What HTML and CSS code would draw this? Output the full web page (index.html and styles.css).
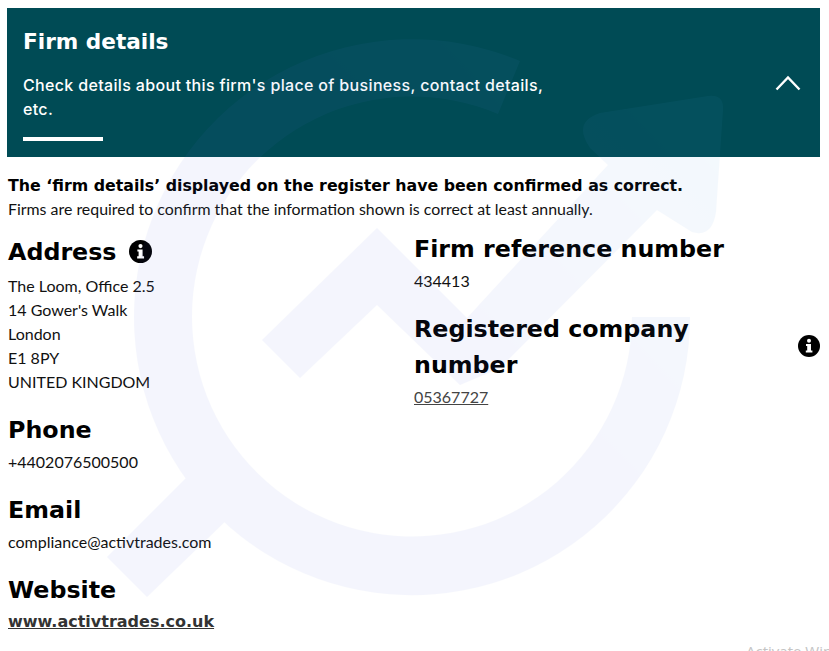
FILE: index.html
```html
<!DOCTYPE html>
<html lang="en">
<head>
    <meta charset="UTF-8">
    <meta name="viewport" content="width=device-width, initial-scale=1.0">
    <title>Firm details</title>
    <link rel="stylesheet" href="styles.css">
</head>
<body>
    <div class="page">
        <!-- Collapsible banner -->
        <div class="banner">
            <div class="banner-text">
                <h2>Firm details</h2>
                <p>Check details about this firm's place of business, contact details, etc.</p>
                <div class="banner-rule"></div>
            </div>
            <svg class="chevron" width="26" height="16" viewBox="0 0 26 16">
                <path d="M1.5 14.5 L13 2.5 L24.5 14.5" fill="none" stroke="#fff" stroke-width="2.4"/>
            </svg>
        </div>

        <div class="notice">
            <strong>The ‘firm details’ displayed on the register have been confirmed as correct.</strong>
            <p>Firms are required to confirm that the information shown is correct at least annually.</p>
        </div>

        <div class="columns">
            <div class="col-left">
                <div class="field">
                    <h3 class="with-icon">Address
                        <svg class="info" width="23" height="23" viewBox="0 0 22 22">
                            <circle cx="11" cy="11" r="11" fill="#000"/>
                            <circle cx="11" cy="5.8" r="2" fill="#fff"/>
                            <path d="M8 9 H13 V15.6 H14.4 V17.6 H7.8 V15.6 H9.2 V11 H8 Z" fill="#fff"/>
                        </svg>
                    </h3>
                    <p>The Loom, Office 2.5</p>
                    <p>14 Gower's Walk</p>
                    <p>London</p>
                    <p>E1 8PY</p>
                    <p>UNITED KINGDOM</p>
                </div>
                <div class="field">
                    <h3>Phone</h3>
                    <p>+4402076500500</p>
                </div>
                <div class="field">
                    <h3>Email</h3>
                    <p>compliance@activtrades.com</p>
                </div>
                <div class="field">
                    <h3>Website</h3>
                    <a class="site-link" href="#">www.activtrades.co.uk</a>
                </div>
            </div>
            <div class="col-right">
                <div class="field">
                    <h3>Firm reference number</h3>
                    <p>434413</p>
                </div>
                <div class="field">
                    <div class="title-row">
                        <h3>Registered company number</h3>
                        <svg class="info raised" width="22" height="22" viewBox="0 0 22 22">
                            <circle cx="11" cy="11" r="11" fill="#000"/>
                            <circle cx="11" cy="5.8" r="2" fill="#fff"/>
                            <path d="M8 9 H13 V15.6 H14.4 V17.6 H7.8 V15.6 H9.2 V11 H8 Z" fill="#fff"/>
                        </svg>
                    </div>
                    <a class="plain-link" href="#">05367727</a>
                </div>
            </div>
        </div>

        <!-- Faint logo over the page -->
        <svg class="watermark" width="829" height="651" viewBox="0 0 829 651">
            <defs>
                <linearGradient id="logo-fill" gradientUnits="userSpaceOnUse" x1="300" y1="500" x2="720" y2="100">
                    <stop offset="0.45" stop-color="#5a6ee0"/>
                    <stop offset="1" stop-color="#4aa8e0"/>
                </linearGradient>
            </defs>
            <path d="M520 61 A278 278 0 1 0 690 317 L632 317 A220 220 0 1 1 498 114 Z" fill="url(#logo-fill)"/>
            <path d="M107 557 L190 474 L232 515 L147 597 Z" fill="url(#logo-fill)"/>
            <path d="M262 340 L377 228 L467 318 L608 165 L590 148 Q572 122 600 113 L708 96 Q724 94 723 110 L716 212 Q712 238 692 232 L657 210 L500 368 L460 385 L377 305 L300 378 Z" fill="url(#logo-fill)"/>
        </svg>

        <div class="os-mark">Activate Windows</div>
    </div>
</body>
</html>
```

FILE: styles.css
```css
* {
    margin: 0;
    padding: 0;
    box-sizing: border-box;
}

body {
    font-family: "Lato", sans-serif;
    background: #fff;
    color: #111;
    overflow: hidden;
}

.page {
    position: relative;
    width: 829px;
    height: 651px;
    padding: 8px 9px 0 7px;
    overflow: hidden;
}

.banner {
    height: 149px;
    background: #004b55;
    color: #fff;
    padding: 20px 19px 0 16px;
    display: flex;
    justify-content: space-between;
    align-items: center;
}

.banner-text {
    width: 535px;
    align-self: flex-start;
}

.banner h2 {
    font-family: "DejaVu Sans", sans-serif;
    font-size: 21.6px;
    line-height: 28px;
    font-weight: 700;
    margin-bottom: 17px;
}

.banner p {
    font-family: "Inter", sans-serif;
    font-size: 16px;
    line-height: 24px;
    font-weight: 500;
    letter-spacing: 0.34px;
}

.banner-rule {
    width: 80px;
    height: 4px;
    background: #fff;
    margin-top: 16px;
}

.chevron {
    margin-bottom: 20px;
}

.notice {
    margin-top: 17px;
    padding-left: 1px;
}

.notice strong {
    display: block;
    font-family: "DejaVu Sans", sans-serif;
    font-size: 15.8px;
    line-height: 24px;
    font-weight: 700;
    color: #000;
}

.notice p {
    font-size: 15.9px;
    line-height: 22px;
}

.columns {
    display: flex;
    margin-top: 11px;
    padding-left: 1px;
}

.col-left {
    width: 406px;
}

.col-right {
    flex: 1;
}

.field {
    margin-bottom: 18px;
}

.field h3 {
    font-family: "DejaVu Sans", sans-serif;
    font-size: 23.75px;
    line-height: 36px;
    font-weight: 700;
    color: #000;
    margin-bottom: 2px;
}

.field p {
    font-size: 16px;
    line-height: 24px;
}

.field h3.with-icon {
    display: flex;
    align-items: center;
    gap: 13px;
    height: 41px;
}

.title-row {
    display: flex;
    align-items: center;
    justify-content: space-between;
}

.title-row h3 {
    width: 300px;
}

.info.raised {
    margin-bottom: 4px;
}

.site-link {
    font-family: "DejaVu Sans", sans-serif;
    font-size: 16px;
    line-height: 24px;
    font-weight: 700;
    color: #333;
}

.plain-link {
    font-size: 16px;
    line-height: 24px;
    color: #444;
}

.watermark {
    position: absolute;
    left: 0;
    top: 0;
    opacity: 0.06;
    pointer-events: none;
}

.os-mark {
    position: absolute;
    left: 746px;
    top: 641px;
    font-family: "Open Sans", sans-serif;
    font-size: 15px;
    color: #c4c4c4;
    white-space: nowrap;
}
```
